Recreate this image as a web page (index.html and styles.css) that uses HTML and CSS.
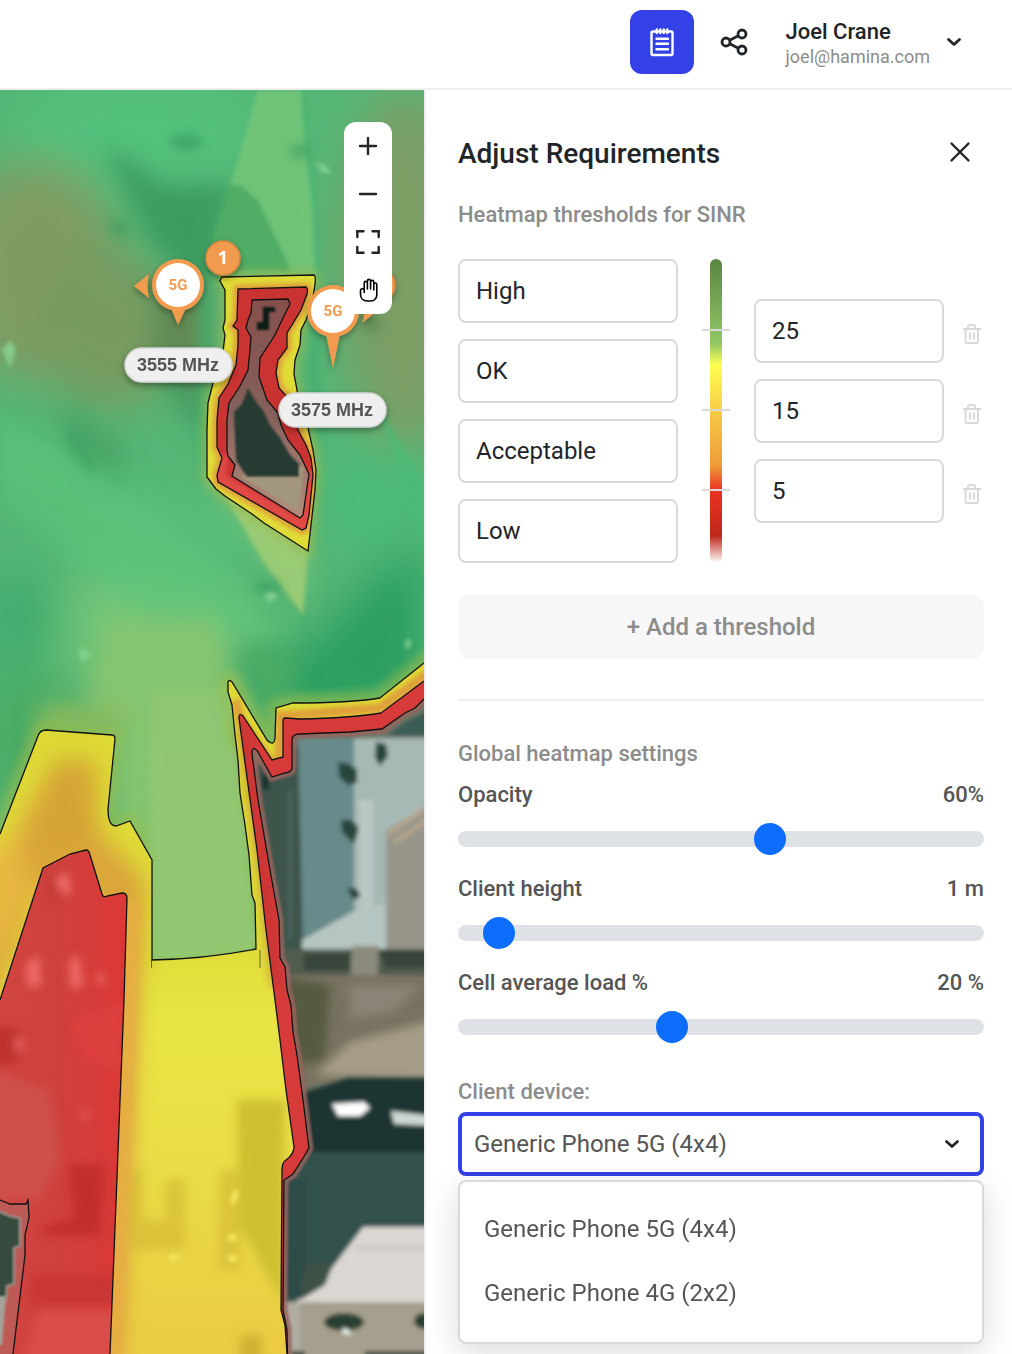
FILE: index.html
```html
<!DOCTYPE html>
<html lang="en">
<head>
<meta charset="utf-8">
<meta name="viewport" content="width=device-width, initial-scale=1">
<title>Adjust Requirements</title>
<link rel="stylesheet" href="styles.css">
</head>
<body>
<header class="topbar">
  <button class="icon-btn icon-btn-active" type="button" aria-label="Notes">
    <svg width="32" height="32" viewBox="0 0 32 32" fill="none" stroke="#fff" stroke-width="2.4" stroke-linecap="round" stroke-linejoin="round"><rect x="5.500" y="5.500" width="21" height="23.500" rx="1.500"/><path d="M10.800 3.500v3.500M14.300 3.500v3.500M17.800 3.500v3.500M21.300 3.500v3.500M10.500 12.700h11.500M10.500 17.800h11.500M10.500 23.200h11.500"/></svg>
  </button>
  <button class="icon-btn" type="button" aria-label="Share">
    <svg width="32" height="32" viewBox="0 0 32 32" fill="none" stroke="#212529" stroke-width="2.800"><circle cx="8" cy="16" r="4"/><circle cx="24" cy="8" r="4"/><circle cx="24" cy="24" r="4"/><path d="M11.600 14.200l8.800-4.400M11.600 17.800l8.800 4.400"/></svg>
  </button>
  <button class="account" type="button">
    <span class="account-text"><span class="account-name">Joel Crane</span><span class="account-mail">joel@hamina.com</span></span>
    <svg width="16" height="16" viewBox="0 0 16 16" fill="none" stroke="#212529" stroke-width="2.800" stroke-linecap="round" stroke-linejoin="round"><path d="M2.500 5.500l5.500 5 5.500-5"/></svg>
  </button>
</header>
<main class="workspace">
  <section class="map" aria-label="Heatmap">
    <svg class="map-canvas" viewBox="0 90 424 1264" preserveAspectRatio="xMinYMin slice">
      <defs>
        <filter id="b1" x="-20%" y="-20%" width="140%" height="140%"><feGaussianBlur stdDeviation="1.200"/></filter>
        <filter id="b2" x="-20%" y="-20%" width="140%" height="140%"><feGaussianBlur stdDeviation="2.200"/></filter>
        <filter id="b3" x="-40%" y="-40%" width="180%" height="180%"><feGaussianBlur stdDeviation="5"/></filter>
        <filter id="b8" x="-60%" y="-60%" width="220%" height="220%"><feGaussianBlur stdDeviation="11"/></filter>
        <filter id="b20" x="-80%" y="-80%" width="260%" height="260%"><feGaussianBlur stdDeviation="22"/></filter>
        <filter id="drop" x="-20%" y="-30%" width="140%" height="180%"><feDropShadow dx="0" dy="3" stdDeviation="3" flood-opacity=".35"/></filter>
        <linearGradient id="yel" x1="0" y1="0" x2="0" y2="1"><stop offset="0" stop-color="#dcd834"/><stop offset=".4" stop-color="#dedb39"/><stop offset=".52" stop-color="#e8e544"/><stop offset=".7" stop-color="#e9de46"/><stop offset="1" stop-color="#ebcb44"/></linearGradient>
        <linearGradient id="redL" x1="0" y1="0" x2="1" y2="0"><stop offset="0" stop-color="#d04541"/><stop offset=".5" stop-color="#cf403d"/><stop offset="1" stop-color="#dc3835"/></linearGradient>
        <linearGradient id="gap" x1="0" y1="0" x2="0" y2="1"><stop offset="0" stop-color="#86504c"/><stop offset=".5" stop-color="#84605a"/><stop offset="1" stop-color="#b58b7b"/></linearGradient>
        <path id="yellowZone" d="M0 834L38 736Q40 730 46 730L112 735Q115 735 115 739L108 809Q108 826 116 826L130 821L152 860V960Q205 959 256 949L255 903L252 895L249 855L245 825L240 793L238 760L235 735L232 705L228 692V682Q229 679 232 682L267 740Q274 747 275 738L276 708L293 703Q350 703 380 698L424 663V1354H0Z"/>
        <path id="redZone" d="M424 681L381 713Q350 718 300 719L285 718Q283 718 283 722V757L272 760L243 716Q239 712 239 718L246 770L257 850L266 930L275 1000L280 1040L286 1090L294 1147Q294 1154 286 1160Q282 1162 282 1170L281 1310L285 1325L287 1354H424Z"/>
        <path id="baseZone" d="M450 680L424 699L415 708L405 713L382 729L350 732L300 734Q292 734 292 740V768Q292 772 285 773L272 777L258 752Q252 744 252 754L258 800L270 870L279 920L280 958L285 967L287 990L291 1005L293 1032L297 1055L303 1100L309 1148L305 1155L293 1174L284 1180L283 1310L287 1330L288 1380H450Z"/>
        <path id="redIsland" d="M43 868L70 854L86 850Q89 850 90 855L102 894Q103 898 107 896L122 893Q127 893 127 898L124 1000L110 1354H0V1000Z"/>
        <path id="bl" d="M0 1200L10 1204L26 1204L28 1200L29 1218L25 1235L25 1255L13 1354H0Z"/>
        <path id="yIsle" d="M222 277L314 275Q316 276 315 284L312 303L306 320L301 330L300 345L295 360L294 374L297 390L299 410L308 428L313 450L316 470L315 490L311 525L308 551L264 523L252 514L240 506L225 496L216 489L207 477V430L208 403L213 383L222 360L225 335L223 328L225 320L225 290L220 281Z"/>
        <path id="rIsle" d="M238 289L306 287Q309 289 306 297L301 310L292 325L287 333L287 348L278 360L276 373L279 388L290 400L298 430L306 445L311 458L313 475L309 515L306 528L302 530L218 482L217 475L222 458L217 447V420L219 398L228 384L236 365L238 345L238 330L233 326L237 320Z"/>
        <path id="cIsle" d="M252 300L288 299L290 304L283 318L275 335L260 358L259 377L267 400L278 413L281 425L288 440L300 455L309 474L303 515L300 518L232 476L235 465L228 456L227 450V420L229 403L240 386L248 370L250 350L251 337L246 328L248 320L251 313Z"/>
        <clipPath id="cy"><use href="#yellowZone"/></clipPath>
        <clipPath id="cb"><use href="#baseZone"/></clipPath>
        <clipPath id="cr"><use href="#redIsland"/></clipPath>
        <clipPath id="ci"><use href="#cIsle"/></clipPath>
        <clipPath id="cl"><use href="#bl"/></clipPath>
        <clipPath id="cyi"><use href="#yIsle"/></clipPath>
        <clipPath id="cri"><use href="#rIsle"/></clipPath>
      </defs>

      <!-- coverage field -->
      <rect y="90" width="424" height="1264" fill="#55b576"/>
      <g filter="url(#b20)">
        <ellipse cx="140" cy="130" rx="130" ry="60" fill="#53c07b"/>
        <ellipse cx="35" cy="270" rx="85" ry="110" fill="#7f9b62"/>
        <ellipse cx="110" cy="330" rx="70" ry="80" fill="#789b61"/>
        <ellipse cx="405" cy="270" rx="65" ry="180" fill="#7b9e65"/>
        <ellipse cx="165" cy="540" rx="90" ry="50" fill="#58be7a"/>
        <ellipse cx="130" cy="625" rx="130" ry="50" fill="#74c679"/>
        <ellipse cx="20" cy="620" rx="50" ry="50" fill="#43ad70"/>
        <ellipse cx="30" cy="740" rx="50" ry="70" fill="#49ab65"/>
        <ellipse cx="370" cy="500" rx="50" ry="60" fill="#4cba79"/>
        <path d="M240 665L310 650L370 580L424 540V700L290 720Z" fill="#2c9f61"/>
      </g>
      <g filter="url(#b8)">
        <path d="M105 150L130 160L160 185H235L215 260L205 300L150 240Z" fill="#3d9b60"/>
        <path d="M155 285H205V395L150 370Z" fill="#638a54"/>
        <path d="M155 370L205 385L200 440Z" fill="#469c62"/>
        <path d="M60 400Q70 470 130 500L120 440Z" fill="#4aa568"/>
        <path d="M0 420L130 480L200 560L290 640L150 620L0 500Z" fill="#5cc47b" opacity=".6"/>
        <path d="M85 690L110 620H215L235 700L250 800L256 950L152 960V860L115 810L118 720Z" fill="#85c571"/>
        <path d="M40 705H125V730H35Z" fill="#8dbc5e"/>
        <path d="M235 655Q270 635 300 660L275 740Z" fill="#4aaa65"/>
        <path d="M200 440L215 490L305 610L311 540Z" fill="#7ec679" opacity=".7"/>
      </g>
      <g filter="url(#b2)">
        <path d="M258 90H302L306 150L313 200L317 275H220L214 235L235 170Z" fill="#74c678" opacity=".85"/>
        <path d="M240 185L258 200L292 272H215L214 235L228 185Z" fill="#47a662" opacity=".75"/>
        <path d="M302 80L306 150L313 200L317 280" fill="none" stroke="#3db273" stroke-width="2"/>
        <path d="M225 495L308 551L303 615L262 560Z" fill="#a2cd74" opacity=".85"/>
        <path d="M375 400L424 480V560L405 500Z" fill="#48bb76" opacity=".6"/>
      </g>
      <g filter="url(#b3)">
        <path d="M152 860V960Q205 959 256 949L250 900L238 760L234 715L228 690L150 690Z" fill="#95c974" opacity=".55"/>
        <path d="M228 740L240 780L255 900V930L235 880L226 860Z" fill="#70ae5c" opacity=".45"/>
        <path d="M155 890L235 860L256 949L152 960Z" fill="#a6d07c" opacity=".6"/>
        <path d="M0 410L70 460L150 510L300 620L170 555L60 500L0 475Z" fill="#58c57d" opacity=".3"/>
      </g>
      <g filter="url(#b3)" fill="#32965b" opacity=".55">
        <ellipse cx="186" cy="142" rx="16" ry="8"/><ellipse cx="300" cy="151" rx="9" ry="7"/><ellipse cx="267" cy="587" rx="15" ry="6"/>
        <ellipse cx="120" cy="228" rx="12" ry="10" opacity=".6"/><ellipse cx="372" cy="325" rx="12" ry="8" fill="#5b8750"/><ellipse cx="80" cy="450" rx="8" ry="28" opacity=".6" transform="rotate(-30 80 450)"/>
      </g>
      <g filter="url(#b2)" fill="#8ad695" opacity=".8"><path d="M78 652l5-5 4 5 6 4-7 2-2 6-3-6zM264 594l10-2 4 5-9 6zM404 644l4-6 4 5-4 7zM2 350l8-10 6 10-6 18zM315 162l12 4 4 8-10-2z"/></g>

      <!-- main yellow and red areas -->
      <use href="#yellowZone" fill="none" stroke="#a0bf4c" stroke-width="18" opacity=".55" filter="url(#b3)"/>
      <path d="M152 855V960Q205 959 256 949L252 895L245 825L236 750L150 740Z" fill="#91c772" filter="url(#b3)"/>
      <use href="#yellowZone" fill="url(#yel)"/>
      <g clip-path="url(#cy)">
        <g filter="url(#b8)">
          <path d="M55 760L95 760L98 830L145 880L138 1000L120 1354H90L90 880L45 880L-20 1040V900Z" fill="#dba53a"/>
          <path d="M55 760L95 760L98 840L60 850L30 860Z" fill="#d6a434"/>
          <path d="M-20 860L20 830L30 900L-20 980Z" fill="#e8b840"/>
        </g>
        <g filter="url(#b3)">
          <path d="M237 1100H285L282 1300L265 1270L240 1225Z" fill="#cdbf31"/>
          <path d="M166 1180H185V1250H140V1220H165ZM220 1170H240V1270H218ZM130 1170H142V1250H128Z" fill="#d0b832" opacity=".6"/>
          <path d="M240 1335H262V1364H240Z" fill="#d0b236"/>
          <path d="M127 900L124 1000L110 1364" fill="none" stroke="#e6ad42" stroke-width="26"/>
        </g>
        <path d="M236 700L240 720L271 762L279 762L281 716L380 708L430 672" fill="none" stroke="#dfa03a" stroke-width="9" filter="url(#b2)"/>
        <g filter="url(#b2)" fill="#f2e45a"><path d="M230 1200l3-9 6-3-2 12-5 6zM226 1238l6-6 6 6-5 5zM167 1257l6-4 9 4-9 5zM226 1256l6-2 8 4-8 6z"/></g>
      </g>
      <path d="M260 950v18M151.500 960v8" stroke="#333" stroke-width=".7"/>
      <use href="#redIsland" fill="url(#redL)"/>
      <g clip-path="url(#cr)"><g filter="url(#b3)">
        <path d="M-10 1025L22 1030L20 1060L-10 1070Z" fill="#bd302e"/>
        <path d="M-10 1070L50 1090L60 1160L40 1200H-10Z" fill="#cd504b"/>
        <path d="M68 1165L105 1165L100 1235H40L45 1225L75 1220Z" fill="#c12f2e"/>
        <path d="M70 1020L130 1000L118 1070L85 1060Z" fill="#dd413d"/>
        <path d="M30 1275L115 1275V1305H30Z" fill="#c63632" opacity=".8"/>
        <path d="M40 1310H120V1364H20Z" fill="#d94e48"/>
        <path d="M45 880l15-10 0 30-10 3z" fill="#bf3835" opacity=".7"/>
        <path d="M55 880l12-8 4 18-5 7zM26 965l12-10 3 30-12 3zM70 960l8-5 5 30-12 5zM95 975l10-2-2 14zM78 1105l5 8 6-3-4 12zM15 1040l6-3 1 12-6 2z" fill="#f0706c"/>
      </g></g>
      <use href="#redZone" fill="#d63b3a"/>
      <path d="M242 725L262 860L276 985" stroke="#b02c2c" stroke-width="9" fill="none" opacity=".4" filter="url(#b3)"/>

      <!-- uncovered aerial ground -->
      <g clip-path="url(#cb)">
        <rect x="240" y="680" width="190" height="680" fill="#6b7566"/>
        <g filter="url(#b2)">
          <path d="M250 770L310 740V960H270Z" fill="#3c554b"/>
          <path d="M290 790V940" stroke="#4b655d" stroke-width="4"/>
          <path d="M298 738H356V915L303 945Z" fill="#688a8b"/>
          <path d="M354 738H434V830L386 842V945H354Z" fill="#a7b9b5"/>
          <path d="M366 800V940" stroke="#b9c8c5" stroke-width="14"/>
          <path d="M386 830L434 802V950H386Z" fill="#98968a"/>
          <path d="M388 834L434 802M394 842L434 816" stroke="#b8a78c" stroke-width="4"/>
          <path d="M385 738L405 722L434 708V736H388Z" fill="#3b5c54"/>
          <path d="M302 940L352 912L386 904V950H302Z" fill="#b5c5c1"/>
          <path d="M338 762l10 2 9 5v14l-9 2-9-8zM341 820l11 0 7 8-5 16-12-12zM347 888l9 0 5 8-8 4zM376 742l10 2 2 12-8 10-5-8z" fill="#26443c"/>
          <path d="M262 775l7-1v16l-7-2z" fill="#182d29"/>
          <path d="M275 949H434V975H275Z" fill="#515c50"/>
          <path d="M380 950H434V968H385ZM304 954H350V970H304Z" fill="#38443a"/>
          <path d="M352 946H378V990H350Z" fill="#8a8b7c"/>
          <path d="M275 975H434V1085H275Z" fill="#777260"/>
        </g>
        <g filter="url(#b3)">
          <path d="M275 975L330 985L325 1060L290 1065Z" fill="#565a40"/>
          <path d="M350 1042L434 1020V1080L315 1075Z" fill="#a59d86"/>
          <path d="M350 985L420 985L395 1012L350 1020Z" fill="#8b8375"/>
        </g>
        <g filter="url(#b2)">
          <path d="M295 1095L330 1084L348 1078H434V1155H295Z" fill="#1c3433"/>
          <path d="M275 1152H434V1235L350 1310H275Z" fill="#31514d"/>
          <path d="M290 1180V1300M297 1180V1300M304 1180V1300" stroke="#203d3b" stroke-width="2"/>
          <path d="M332 1104L364 1102L370 1108L360 1116L338 1116Z" fill="#fff"/>
          <path d="M391 1111L434 1116V1126L394 1124Z" fill="#ccd6d2"/>
          <path d="M363 1227H434V1302H296L332 1268Z" fill="#dad6d2"/>
          <path d="M354 1248H434" stroke="#c4bcb9" stroke-width="2"/>
          <path d="M305 1265L334 1262L325 1285L300 1300Z" fill="#3d5144"/>
          <path d="M275 1302H434V1364H275Z" fill="#a69f8d"/>
          <path d="M275 1302H300V1364H275Z" fill="#b0aca2"/>
          <ellipse cx="344" cy="1322" rx="20" ry="9" fill="#2c4033"/><ellipse cx="424" cy="1321" rx="10" ry="8" fill="#2c4033"/>
          <path d="M342 1328l6 1 4 6-9-1z" fill="#e8f0ec"/>
          <path d="M290 1351H305V1364H290ZM365 1351H434V1364H365Z" fill="#48534a"/>
        </g>
        <use href="#baseZone" fill="none" stroke="#98655e" stroke-width="9" opacity=".85" filter="url(#b1)"/>
      </g>
      <g clip-path="url(#cl)">
        <path d="M0 1200H30V1354H0Z" fill="#bd5a55"/>
        <path d="M-5 1210L10 1216L20 1218V1246L14 1248V1284L7 1286L6 1300H-5Z" fill="#354b3e" stroke="#98918a" stroke-width="2" filter="url(#b1)"/>
        <path d="M-5 1296H6L2 1345H-5Z" fill="#a3a298" filter="url(#b1)"/>
      </g>

      <!-- coverage gap around the building -->
      <path d="M205 290V400L200 470M318 290L314 390L320 440" stroke="#38ad6e" stroke-width="7" fill="none" opacity=".7" filter="url(#b3)"/>
      <use href="#yIsle" fill="none" stroke="#9cba4c" stroke-width="9" opacity=".7" filter="url(#b3)"/>
      <use href="#yIsle" fill="#dfdc38"/>
      <g clip-path="url(#cyi)"><use href="#rIsle" fill="none" stroke="#e0a23b" stroke-width="9" filter="url(#b2)"/></g>
      <use href="#rIsle" fill="#c93332"/>
      <g clip-path="url(#cri)"><path d="M222 455L219 478L302 526L307 520L310 470" fill="none" stroke="#e04844" stroke-width="12" filter="url(#b2)"/></g>
      <use href="#cIsle" fill="url(#gap)"/>
      <g clip-path="url(#ci)"><g filter="url(#b1)">
        <path d="M240 476L304 466L299 512Z" fill="#a3967e"/>
        <path d="M248 388L256 402L264 412L270 425L280 438L290 455L299 464V477H247L236 460L234 412L242 404Z" fill="#263b32"/>
        <path d="M263 307H275V312H269V330H257V322H263Z" fill="#0c1c14"/>
      </g></g>
      <g fill="none" stroke="#111" stroke-width="1.300">
        <path d="M0 834L38 736Q40 730 46 730L112 735Q115 735 115 739L108 809Q108 826 116 826L130 821L152 860V960Q205 959 256 949L255 903L252 895L249 855L245 825L240 793L238 760L235 735L232 705L228 692V682Q229 679 232 682L267 740Q274 747 275 738L276 708L293 703Q350 703 380 698L424 663"/>
        <path d="M424 681L381 713Q350 718 300 719L285 718Q283 718 283 722V757L272 760L243 716Q239 712 239 718L246 770L257 850L266 930L275 1000L280 1040L286 1090L294 1147Q294 1154 286 1160Q282 1162 282 1170L281 1310L285 1325L287 1354"/>
        <use href="#baseZone"/>
        <path d="M0 1000L43 868L70 854L86 850Q89 850 90 855L102 894Q103 898 107 896L122 893Q127 893 127 898L124 1000L110 1354"/>
        <path d="M0 1200L10 1204L26 1204L28 1200L29 1218L25 1235L25 1255L13 1354"/>
        <use href="#yIsle"/><use href="#rIsle"/><use href="#cIsle"/>
      </g>

      <!-- antennas -->
      <g fill="#f29b50" filter="url(#drop)">
        <circle cx="378" cy="285" r="17" stroke="#d9843d" stroke-width="1.500"/>
        <path d="M362 323Q366 314 363 305L376 312Z"/>
        <path d="M134 286L149 274Q146 286 149 298Z"/>
        <path d="M171 308H186L178 325Z"/><circle cx="178" cy="285" r="26"/>
        <path d="M326 334H340L333 368Z"/><circle cx="333" cy="311" r="26"/>
        <circle cx="223" cy="258" r="17" stroke="#d9843d" stroke-width="1.500"/>
      </g>
      <circle cx="178" cy="285" r="22" fill="#fff"/><circle cx="333" cy="311" r="22" fill="#fff"/>
      <g class="pin-text"><text x="178" y="290">5G</text><text x="333" y="316">5G</text></g>
      <text class="badge-text" x="223" y="264">1</text>
      <g fill="#efefef" stroke="#d4d4d4" stroke-width="1.500" filter="url(#drop)"><rect x="125" y="348" width="107" height="34" rx="17"/><rect x="279" y="393" width="107" height="34" rx="17"/></g>
      <g class="freq-text"><text x="178" y="371">3555 MHz</text><text x="332" y="416">3575 MHz</text></g>
    </svg>
    <div class="map-tools">
      <button type="button" aria-label="Zoom in"><svg width="24" height="24" viewBox="0 0 24 24"><path d="M12 4v16M4 12h16"/></svg></button>
      <button type="button" aria-label="Zoom out"><svg width="24" height="24" viewBox="0 0 24 24"><path d="M4 12h16"/></svg></button>
      <button type="button" aria-label="Fit to screen"><svg width="24" height="24" viewBox="0 0 24 24"><path d="M1.300 7V1.300H7.500M16.500 1.300h6.200V7M22.700 17v5.700H16.500M7.500 22.700H1.300V17"/></svg></button>
      <button type="button" aria-label="Pan"><svg class="hand" width="24" height="24" viewBox="0 0 24 24"><path d="M8.200 13V5a1.600 1.600 0 0 1 3.200 0v6M11.400 11V3a1.600 1.600 0 0 1 3.200 0v8M14.600 11V4a1.600 1.600 0 0 1 3.200 0v8M17.800 12V6.500a1.500 1.500 0 0 1 3 0V17a6 6 0 0 1-6 6h-3.500c-4 0-6.800-2.500-6.800-6.500V12.500c0-2.200 3.700-2.500 3.700 0v2"/></svg></button>
    </div>
  </section>

  <aside class="panel">
    <div class="panel-head">
      <h1>Adjust Requirements</h1>
      <button class="close" type="button" aria-label="Close"><svg width="24" height="24" viewBox="0 0 24 24" fill="none" stroke="#212529" stroke-width="2.400" stroke-linecap="round"><path d="M3.500 3.500l17 17M20.500 3.500l-17 17"/></svg></button>
    </div>
    <h2>Heatmap thresholds for SINR</h2>
    <div class="thresholds">
      <div class="names">
        <input type="text" value="High" aria-label="Level 1 name">
        <input type="text" value="OK" aria-label="Level 2 name">
        <input type="text" value="Acceptable" aria-label="Level 3 name">
        <input type="text" value="Low" aria-label="Level 4 name">
      </div>
      <div class="scale"><i></i><i></i><i></i></div>
      <div class="limits">
        <div class="limit"><input type="text" value="25" aria-label="Threshold 1"><button type="button" aria-label="Delete threshold 1"><svg width="20" height="22" viewBox="0 0 20 22"><path d="M1 6h18M6 6V3.500A1.500 1.500 0 0 1 7.500 2h4A1.500 1.500 0 0 1 13 3.500V6M3.500 6v12.500a1.500 1.500 0 0 0 1.500 1.500h9.500a1.500 1.500 0 0 0 1.500-1.500V6M7.800 9.500v7M11.800 9.500v7"/></svg></button></div>
        <div class="limit"><input type="text" value="15" aria-label="Threshold 2"><button type="button" aria-label="Delete threshold 2"><svg width="20" height="22" viewBox="0 0 20 22"><path d="M1 6h18M6 6V3.500A1.500 1.500 0 0 1 7.500 2h4A1.500 1.500 0 0 1 13 3.500V6M3.500 6v12.500a1.500 1.500 0 0 0 1.500 1.500h9.500a1.500 1.500 0 0 0 1.500-1.500V6M7.800 9.500v7M11.800 9.500v7"/></svg></button></div>
        <div class="limit"><input type="text" value="5" aria-label="Threshold 3"><button type="button" aria-label="Delete threshold 3"><svg width="20" height="22" viewBox="0 0 20 22"><path d="M1 6h18M6 6V3.500A1.500 1.500 0 0 1 7.500 2h4A1.500 1.500 0 0 1 13 3.500V6M3.500 6v12.500a1.500 1.500 0 0 0 1.500 1.500h9.500a1.500 1.500 0 0 0 1.500-1.500V6M7.800 9.500v7M11.800 9.500v7"/></svg></button></div>
      </div>
    </div>
    <button class="add" type="button">+ Add a threshold</button>
    <hr>
    <h2>Global heatmap settings</h2>
    <div class="sliders">
      <div class="slider">
        <div class="slider-head"><label for="opacity">Opacity</label><output for="opacity">60%</output></div>
        <input id="opacity" type="range" min="0" max="100" value="60">
      </div>
      <div class="slider">
        <div class="slider-head"><label for="height">Client height</label><output for="height">1 m</output></div>
        <input id="height" type="range" min="0" max="20" value="1">
      </div>
      <div class="slider">
        <div class="slider-head"><label for="load">Cell average load %</label><output for="load">20 %</output></div>
        <input id="load" type="range" min="0" max="50" value="20">
      </div>
    </div>
    <label class="device-label" for="device">Client device:</label>
    <div class="device">
      <select id="device"><option>Generic Phone 5G (4x4)</option><option>Generic Phone 4G (2x2)</option></select>
      <svg class="device-arrow" width="16" height="16" viewBox="0 0 16 16" fill="none" stroke="#212529" stroke-width="2.800" stroke-linecap="round" stroke-linejoin="round"><path d="M2.500 5.500l5.500 5 5.500-5"/></svg>
      <ul class="device-menu" role="listbox" aria-label="Client device">
        <li role="option" aria-selected="true">Generic Phone 5G (4x4)</li>
        <li role="option" aria-selected="false">Generic Phone 4G (2x2)</li>
      </ul>
    </div>
  </aside>
</main>
</body>
</html>
```
FILE: styles.css
```css
* { box-sizing: border-box; }

body {
  margin: 0;
  min-height: 100vh;
  display: flex;
  flex-direction: column;
  font-family: Roboto, sans-serif;
  font-size: 22px;
  line-height: 28px;
  color: #212529;
  background: #fff;
}

button, input, select { font: inherit; color: inherit; }
button { border: 0; padding: 0; background: none; }
button svg { display: block; }

.topbar {
  display: flex;
  align-items: center;
  justify-content: flex-end;
  gap: 8px;
  padding: 10px 50px 14px 16px;
  border-bottom: 2px solid #efefef;
}

.icon-btn {
  width: 64px;
  height: 64px;
  display: grid;
  place-items: center;
  border-radius: 12px;
}
.icon-btn-active { background: #3341e6; }

.account {
  display: flex;
  align-items: center;
  gap: 16px;
  margin-left: 12px;
  text-align: left;
}
.account-text { display: grid; padding-top: 4px; }
.account-name { font-weight: 500; line-height: 26px; }
.account-mail { font-size: 18px; line-height: 24px; color: #8c8c8c; }

.workspace { flex: 1; display: flex; }

.map {
  flex: 1;
  position: relative;
  min-width: 0;
  overflow: hidden;
  background: #52b475;
}
.map-canvas { position: absolute; inset: 0; width: 100%; height: 100%; }
.map-canvas text { text-anchor: middle; font-weight: 700; }
.pin-text { font-size: 15px; fill: #f29b50; }
.badge-text { font-family: "Open Sans", sans-serif; font-size: 18px; fill: #fff; }
.freq-text { font-family: "Liberation Sans", sans-serif; font-size: 18px; fill: #555; }

.map-tools {
  position: absolute;
  top: 32px;
  right: 32px;
  width: 48px;
  border-radius: 12px;
  background: #fff;
}
.map-tools button { width: 48px; height: 48px; display: grid; place-items: center; }
.map-tools path { fill: none; stroke: #212529; stroke-width: 2.4; stroke-linecap: round; }
.map-tools .hand path { stroke: #000; stroke-width: 1.6; stroke-linejoin: round; }

.panel {
  flex: 0 0 588px;
  padding: 44px 28px 100px 32px;
  border-left: 2px solid #efefef;
}
.panel-head { display: flex; justify-content: space-between; align-items: flex-end; height: 40px; }
.panel-head h1 { line-height: 40px; }
.close { width: 48px; height: 44px; display: grid; place-items: center; }

h1 { margin: 0; font-size: 28px; font-weight: 500; }
h2 { margin: 0; font-size: 22px; font-weight: 500; color: #8c8c8c; }
.panel-head + h2 { margin: 27px 0 30px; }

.thresholds { display: flex; align-items: center; }
.names, .limits { display: grid; gap: 16px; }
.names { flex: 0 0 220px; }
.limits { flex: 1; }

.thresholds input {
  width: 100%;
  min-width: 0;
  height: 64px;
  padding: 0 16px;
  border: 2px solid #d9d9d9;
  border-radius: 8px;
  background: #fff;
  font-size: 24px;
}

.scale {
  align-self: stretch;
  width: 12px;
  margin: 0 32px;
  display: flex;
  flex-direction: column;
  align-items: center;
  gap: 78px;
  padding-top: 70px;
  border-radius: 6px;
  background: linear-gradient(#5a8441, #8dc264 25%, #95c962 28%, #ffff50 35%, #f5c544 52%, #f09a38 68%, #ea3323 76%, #be271a 91%, #fff);
}
.scale i { flex: none; width: 28px; height: 2px; background: #d9d9d9; }

.limit { display: flex; align-items: center; }
.limit button { flex: none; width: 40px; height: 40px; padding: 6px 2px 0 18px; }
.limit path { fill: none; stroke: #d9d9d9; stroke-width: 2; }

.add {
  display: block;
  width: 100%;
  height: 64px;
  margin-top: 32px;
  border-radius: 12px;
  background: #f7f7f7;
  color: #8c8c8c;
  font-size: 24px;
  font-weight: 500;
}
hr { height: 2px; margin: 40px 0 39px; border: 0; background: #efefef; }

.sliders { display: grid; gap: 20px; margin: 13px 0 34px; }
.slider { display: grid; gap: 14px; }
.slider-head { display: flex; justify-content: space-between; font-weight: 500; color: #555; }

input[type="range"] {
  appearance: none;
  width: 100%;
  height: 32px;
  margin: 0;
  background: none;
}
input[type="range"]::-webkit-slider-runnable-track {
  height: 16px;
  border-radius: 8px;
  background: #dee2e6;
}
input[type="range"]::-webkit-slider-thumb {
  appearance: none;
  width: 32px;
  height: 32px;
  margin-top: -8px;
  border-radius: 50%;
  background: #0d6efd;
}

.device-label { display: block; margin: 35px 0 6px; font-weight: 500; color: #8c8c8c; }
.device { position: relative; font-size: 24px; color: #555; }
.device select {
  appearance: none;
  display: block;
  width: 100%;
  height: 64px;
  padding: 0 48px 0 12px;
  border: 4px solid #3341e6;
  border-radius: 8px;
  background: #fff;
}
.device-arrow { position: absolute; top: 24px; right: 24px; pointer-events: none; }
.device-menu {
  position: absolute;
  top: 68px;
  left: 0;
  right: 0;
  margin: 0;
  padding: 15px 24px 17px;
  list-style: none;
  border: 2px solid #d9d9d9;
  border-radius: 8px;
  background: #fff;
  box-shadow: 0 8px 32px rgba(0, 0, 0, .15);
}
.device-menu li { line-height: 64px; }
```
